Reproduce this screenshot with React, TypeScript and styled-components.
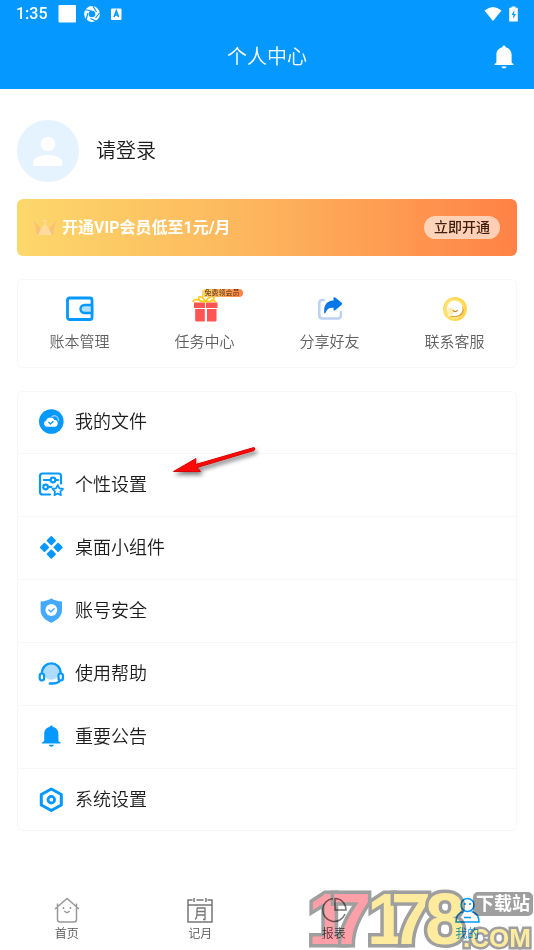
import React from "react";
import styled, { createGlobalStyle } from "styled-components";

const BLUE = "#0598ff";

const GlobalStyle = createGlobalStyle`
  * { box-sizing: border-box; }
  body {
    margin: 0;
    background: #fff;
    color: #1c1c1c;
    font-family: Roboto, "Noto Sans CJK SC", sans-serif;
  }
  button { font: inherit; color: inherit; border: 0; padding: 0; background: none; cursor: pointer; }
  a { color: inherit; text-decoration: none; }
  h1, ul { margin: 0; padding: 0; font-weight: inherit; list-style: none; }
  svg { display: block; flex: none; }
`;

const Screen = styled.div`
  position: relative;
  display: flex;
  flex-direction: column;
  min-height: 100vh;
  overflow: hidden;
`;

const TopArea = styled.header`
  background: ${BLUE};
  color: #fff;
`;

const StatusBar = styled.div`
  display: flex;
  align-items: center;
  justify-content: space-between;
  height: 27px;
  padding: 0 14px 0 16px;
  font-size: 16px;
  font-weight: 500;
`;

const StatusGroup = styled.div<{ $gap: number }>`
  display: flex;
  align-items: center;
  gap: ${(p) => p.$gap}px;
`;

const TitleBar = styled.div`
  display: grid;
  grid-template-columns: 1fr auto 1fr;
  align-items: center;
  height: 62px;
  padding: 0 18px 2px;
`;

const Title = styled.h1`
  grid-column: 2;
  font-size: 20px;
  line-height: 28px;
  font-weight: 350;
`;

const BellButton = styled.button`
  justify-self: end;
`;

const Content = styled.main`
  display: flex;
  flex-direction: column;
  padding: 31px 17px 0;
`;

const Profile = styled.button`
  display: flex;
  align-items: center;
  align-self: flex-start;
  gap: 17px;
  font-size: 20px;
  line-height: 28px;
  font-weight: 350;
`;

const Banner = styled.section`
  display: flex;
  align-items: center;
  height: 57px;
  margin-top: 17px;
  padding: 0 17px 0 16px;
  border-radius: 6px;
  background: linear-gradient(90deg, #fcd86b, #fdb35c 50%, #ff8246);
`;

const BannerText = styled.span`
  flex: 1;
  margin-left: 5px;
  color: #fff;
  font-size: 16px;
  line-height: 24px;
  font-weight: 700;
`;

const OpenButton = styled.button`
  height: 23px;
  padding: 0 10px;
  border-radius: 12px;
  background: rgba(255, 255, 255, 0.6);
  color: #402010;
  font-size: 14px;
  line-height: 23px;
  font-weight: 500;
`;

const Card = styled.ul`
  border-radius: 6px;
  box-shadow: inset 0 0 0 1px #f7f7f7;
`;

const Shortcuts = styled(Card)`
  display: grid;
  grid-template-columns: repeat(4, 1fr);
  height: 89px;
  margin-top: 23px;
`;

const Shortcut = styled.a`
  display: flex;
  flex-direction: column;
  align-items: center;
  gap: 8px;
  padding-top: 16px;
  color: #606060;
  font-size: 15px;
  line-height: 22px;
  font-weight: 350;
`;

const IconHolder = styled.span`
  position: relative;
`;

const PromoBadge = styled.span`
  position: absolute;
  top: -6px;
  left: 12px;
  height: 8px;
  padding: 0 3px;
  border-radius: 4px 4px 4px 0;
  background: linear-gradient(90deg, #fbd568, #ff8246);
  color: #402010;
  font-size: 7px;
  line-height: 8px;
  white-space: nowrap;
`;

const Menu = styled(Card)`
  margin-top: 23px;
`;

const MenuItem = styled.li`
  &:not(:last-child) { border-bottom: 1px solid #f7f7f7; }
`;

const MenuLink = styled.a`
  display: flex;
  align-items: center;
  gap: 11px;
  height: 62px;
  padding: 0 21px;
  font-size: 18px;
  line-height: 26px;
  font-weight: 350;
`;

const TabBar = styled.nav`
  display: grid;
  grid-template-columns: repeat(4, 1fr);
  margin-top: auto;
  padding: 12px 0 7px;
`;

const Tab = styled.a<{ $active?: boolean }>`
  display: flex;
  flex-direction: column;
  align-items: center;
  gap: 2px;
  color: ${(p) => (p.$active ? BLUE : "#555")};
  font-size: 12px;
  line-height: 18px;
  font-weight: 350;
`;

const Pointer = styled.svg`
  position: absolute;
  top: 440px;
  left: 168px;
  pointer-events: none;
  filter: drop-shadow(2px 3px 2px rgba(0, 0, 0, 0.5));
`;

const Watermark = styled.svg`
  position: absolute;
  right: 0;
  bottom: 0;
  pointer-events: none;
  mix-blend-mode: multiply;
`;

const Bell = ({ size, color }: { size: number; color: string }) => (
  <svg width={size} height={size} viewBox="0 0 24 24" fill={color} aria-hidden="true">
    <path d="M12 .5c1 0 1.600.7 1.600 1.800 3.700.8 6 3.600 6 7.400v7.100c0 1 .7 1.500 1.900 2.200v1h-19v-1c1.200-.7 1.900-1.200 1.900-2.200V9.700c0-3.800 2.300-6.600 6-7.400C10.400 1.200 11 .5 12 .5zM9.500 21.500h5c-.2 1.300-1.200 2-2.500 2s-2.300-.7-2.500-2z" />
  </svg>
);

const Wallet = () => (
  <svg width="30" height="28" viewBox="0 0 30 28" fill="none" stroke={BLUE} strokeWidth="2.8">
    <rect x="2.500" y="3" width="24.500" height="21.500" rx="2" />
    <path d="M27 10h-7.500a4 4 0 0 0 0 8H27z" fill="#b0dfff" strokeWidth="2.4" />
  </svg>
);

const Gift = () => (
  <svg width="30" height="28" viewBox="0 0 30 28" aria-hidden="true">
    <path fill="#ff5454" d="M4 7.500h11v5.500H4zM16 7.500h11.500v5.500H16zM5.200 14h9.600v12.500H6.500q-1.300 0-1.300-1.300zM17 14h9.500v11.200q0 1.300-1.300 1.300H17z" />
    <path fill="none" stroke="#ffc914" strokeWidth="1.6" strokeLinecap="round" d="M15.500 6.500C13 1.500 8.500.5 8.500 3.500c0 2.500 4 3.500 7 3 4 .5 8.500-.5 8.500-3.300 0-3-5.500-1.700-8.500 3.300M9 5.500C6.500 3.800 4 4.500 3 6.500M22 5l3.500 1.500" />
  </svg>
);

const Share = () => (
  <svg width="30" height="28" viewBox="0 0 30 28" fill="none">
    <path d="M9 5H7.500Q4.300 5 4.300 8.200v12Q4.300 23.500 7.500 23.500h15.200q3.200 0 3.200-3.200V17" stroke="#bdd1f2" strokeWidth="2.5" strokeLinecap="round" />
    <path d="M18.500 2.500q.8-.7 1.700.1l6.500 5.200q1 1 0 2l-6.500 5.400q-1.700 1-1.700-.8v-1.600c-4.500-.5-6.500 1.200-8 5.300q-1.300 1-1.300-.7C8.700 10.500 11.500 6 18.500 5.600z" fill="#0877e8" />
  </svg>
);

const Service = () => (
  <svg width="30" height="28" viewBox="0 0 30 28">
    <circle cx="15" cy="14" r="12" fill="#ffd84f" />
    <circle cx="14" cy="14" r="10.300" fill="#ffe37a" />
    <path d="M10 22q-3-1-2-5 1-8 8-9 7 1 8 7-1 7-8 7z" fill="#e4a33c" />
    <path d="M15 5.800a7.700 7.700 0 1 1-2.500 15l-3.800 1 .7-2.800A7.700 7.700 0 0 1 15 5.800z" fill="#fff" />
    <path d="M7.500 15q0-3 3-2.500 3 0 3.500 3 .3 4-3 5l-3 .7z" fill="#ffeeb1" />
    <path d="M12.800 15.200q2.500 3 4.800 0" stroke="#ca8128" strokeWidth="1.2" fill="none" />
  </svg>
);

const shortcuts = [
  { label: "账本管理", icon: <Wallet /> },
  { label: "任务中心", icon: <Gift />, badge: "免费领会员" },
  { label: "分享好友", icon: <Share /> },
  { label: "联系客服", icon: <Service /> },
];

const MenuIcon = ({ children }: { children: React.ReactNode }) => (
  <svg width="26" height="26" viewBox="0 0 26 26" fill="none" stroke={BLUE} strokeWidth="2.2" strokeLinecap="round" strokeLinejoin="round" aria-hidden="true">
    {children}
  </svg>
);

const menu = [
  {
    label: "我的文件",
    icon: (
      <MenuIcon>
        <circle cx="13.300" cy="12.500" r="12.300" fill={BLUE} stroke="none" />
        <path d="M14 7.500c3-2 6.500 0 6.500 4" stroke="#8bcfff" strokeWidth="1.4" />
        <path d="M8.800 17.800a3.300 3.300 0 0 1-.6-6.400c.8-3.600 6.800-4.200 8.300-.5 4.400.2 4.300 6.500.3 6.900z" fill="#fff" stroke="none" />
        <path d="M10.800 13.300l1.700 1.700 2.500-2.500" strokeWidth="1.3" />
      </MenuIcon>
    ),
  },
  {
    label: "个性设置",
    icon: (
      <MenuIcon>
        <path d="M12 22.500H4.500Q2 22.500 2 20V4q0-2.500 2.500-2.500h16Q23 1.500 23 4v7.500M6 8h6M18 8h2M10 15h3.500" />
        <circle cx="15" cy="8" r="2.300" />
        <circle cx="7.600" cy="15" r="2.300" />
        <path d="M19.800 13l1.600 3.300 3.600.6-2.600 2.600.5 3.700-3.200-1.700-3.300 1.700.6-3.700-2.600-2.600 3.600-.6z" strokeWidth="1.7" />
      </MenuIcon>
    ),
  },
  {
    label: "桌面小组件",
    icon: (
      <MenuIcon>
        <path fill={BLUE} strokeWidth="1.8" d="M13.300 2l3.700 3.700-3.700 3.700-3.700-3.700zM13.300 15.400l3.700 3.700-3.700 3.700-3.700-3.700zM6.500 8.700l3.700 3.700-3.700 3.700-3.700-3.700zM20.100 8.700l3.700 3.700-3.700 3.700-3.700-3.700z" />
      </MenuIcon>
    ),
  },
  {
    label: "账号安全",
    icon: (
      <MenuIcon>
        <path d="M13.300.2c3 2.200 6.500 3 10.700 3.300v9c0 5.500-4.700 9.500-10.700 12.300C7.300 22 2.600 18 2.600 12.500v-9C6.800 3.200 10.300 2.400 13.300.2z" fill="#45a9ff" stroke="none" />
        <circle cx="13.300" cy="12" r="5.900" fill="#fff" stroke="none" />
        <path d="M10.800 12l2 2 3.300-3.300" stroke="#45a9ff" strokeWidth="1.4" />
      </MenuIcon>
    ),
  },
  {
    label: "使用帮助",
    icon: (
      <MenuIcon>
        <circle cx="13.300" cy="11" r="7.800" fill="#addcff" stroke="none" />
        <path d="M4 12.500C4 -1 22.600 -1 22.600 12.500M22.300 18q-1 4.500-7.500 4.500h-3" strokeWidth="2.4" />
        <rect x="1.700" y="12.500" width="4.400" height="7" rx="2.200" fill="#fff" />
        <rect x="20.500" y="12.500" width="4.400" height="7" rx="2.200" fill="#fff" />
      </MenuIcon>
    ),
  },
  {
    label: "重要公告",
    icon: (
      <MenuIcon>
        <path fill={BLUE} stroke="none" d="M13.300 1.500c1 0 1.500.6 1.500 1.600 3.500.7 5.600 3.200 5.600 6.700v6.700c0 .9.800 1.400 2.200 2v.9H4v-.9c1.400-.6 2.200-1.100 2.200-2V9.800c0-3.500 2.100-6 5.600-6.700 0-1 .5-1.600 1.500-1.600zM10.800 20.800h5c-.2 1.200-1.200 1.900-2.500 1.900s-2.300-.7-2.500-1.900z" />
      </MenuIcon>
    ),
  },
  {
    label: "系统设置",
    icon: (
      <MenuIcon>
        <path strokeWidth="3" d="M13.300 2l10 5.500v10.500l-10 5.500-10-5.500V7.500z" />
        <circle cx="13.300" cy="12.700" r="3.300" strokeWidth="2.800" />
      </MenuIcon>
    ),
  },
];

const TabIcon = ({ children, color = "#999" }: { children: React.ReactNode; color?: string }) => (
  <svg width="26" height="26" viewBox="0 0 26 26" fill="none" stroke={color} strokeWidth="1.5" aria-hidden="true">
    {children}
  </svg>
);

const tabs = [
  {
    label: "首页",
    icon: (
      <TabIcon>
        <path d="M1 12L13 1.500 25 12M3.500 10v12.500q0 2.500 2.500 2.500h14q2.500 0 2.500-2.500V10M3.500 9V6.500M22.500 9V6.500" />
        <path d="M10.300 14q2.700 3 5.400 0M9.500 10v2M16.500 10v2" />
      </TabIcon>
    ),
  },
  {
    label: "记月",
    icon: (
      <TabIcon color="#777">
        <path d="M5.500 3H1v22h24V3h-4.500M1 8h24M7 1v4M19 1v4M9.500 3h7" />
        <path d="M10 11h8v11.500h-2M10 11v5q0 5-2 6.500M10 14.500h8M10 18h8" strokeWidth="1.3" />
      </TabIcon>
    ),
  },
  {
    label: "报表",
    icon: (
      <TabIcon color="#777">
        <path d="M12 1.500A11.500 11.500 0 1 0 24 17M14 1.500V13h11C25 7 20.500 1.500 14 1.500z" />
      </TabIcon>
    ),
  },
  {
    label: "我的",
    active: true,
    icon: (
      <TabIcon color={BLUE}>
        <circle cx="13.500" cy="8" r="6.500" />
        <path d="M9.500 14.500Q2 16.500 2 25h23q0-8.500-7.500-10.500M10 20.500h7M11 6v2M16 6v2" />
      </TabIcon>
    ),
  },
];

export default function App() {
  return (
    <>
      <GlobalStyle />
      <Screen>
        <TopArea>
          <StatusBar>
            <StatusGroup $gap={8}>
              <span>1:35</span>
              <svg width="70" height="18" viewBox="0 0 70 18" aria-hidden="true">
                <rect x="2.500" y="0" width="17.500" height="17.500" rx="1" fill="#fff" />
                <circle cx="36" cy="9" r="5.600" fill="none" stroke="#fff" strokeWidth="4.6" />
                <path d="M28.500 4.500l7 1.500M37 1l3.500 6M43.500 8l-4 5M41 16.500l-6.500-3M30 15l2-7" stroke={BLUE} strokeWidth="1.2" />
                <rect x="55" y="3.500" width="10.500" height="11.500" rx="1" fill="#fff" />
                <path d="M58 12l2.300-6 2.300 6M58.700 10h3.200" fill="none" stroke={BLUE} strokeWidth="1.6" />
              </svg>
            </StatusGroup>
            <StatusGroup $gap={6}>
              <svg width="18" height="16" viewBox="0 0 18 16" aria-label="Wi-Fi">
                <path d="M.5 4.500Q9-2.500 17.500 4.500L9 15z" fill="#fff" />
              </svg>
              <svg width="12" height="16" viewBox="0 0 12 16" aria-label="电池">
                <path d="M3.500 1.800V.5h4v1.300h2.300V15.500H1.200V1.800z" fill="#fff" />
                <path d="M6.500 4L3.500 9h2L5 13l3-5H6z" fill={BLUE} />
              </svg>
            </StatusGroup>
          </StatusBar>
          <TitleBar>
            <Title>个人中心</Title>
            <BellButton aria-label="通知"><Bell size={24} color="#fff" /></BellButton>
          </TitleBar>
        </TopArea>

        <Content>
          <Profile>
            <svg width="62" height="62" viewBox="0 0 62 62" aria-hidden="true">
              <circle cx="31" cy="31" r="31" fill="#e4f3ff" />
              <circle cx="31" cy="24" r="7.300" fill="#fff" />
              <path d="M16 46v-3.500c0-4.500 8-7.500 15-7.500s14.500 3 14.500 7.500V46z" fill="#fff" />
            </svg>
            <span>请登录</span>
          </Profile>

          <Banner>
            <svg width="24" height="18" viewBox="0 0 24 18" aria-hidden="true">
              <path d="M2 4l5 4.500L5.500 16H4zM22 4l-5 4.500L18.500 16H20z" fill="#f8bd68" />
              <path d="M4 16L3 5l5.500 6L12 2l3.500 9L21 5l-1 11z" fill="#fac07c" />
              <path d="M5 16l7-13 7 13z" fill="#ffdc9b" />
              <circle cx="12" cy="2" r="1.300" fill="#ffdc9b" />
              <circle cx="2" cy="4" r="1.300" fill="#fac583" />
              <circle cx="22" cy="4" r="1.300" fill="#fac583" />
            </svg>
            <BannerText>开通VIP会员低至1元/月</BannerText>
            <OpenButton>立即开通</OpenButton>
          </Banner>

          <Shortcuts>
            {shortcuts.map((s) => (
              <li key={s.label}>
                <Shortcut href="#">
                  <IconHolder>
                    {s.icon}
                    {s.badge && <PromoBadge>{s.badge}</PromoBadge>}
                  </IconHolder>
                  {s.label}
                </Shortcut>
              </li>
            ))}
          </Shortcuts>

          <Menu>
            {menu.map((m) => (
              <MenuItem key={m.label}>
                <MenuLink href="#">
                  {m.icon}
                  {m.label}
                </MenuLink>
              </MenuItem>
            ))}
          </Menu>
        </Content>

        <TabBar>
          {tabs.map((t) => (
            <Tab key={t.label} href="#" $active={t.active}>
              {t.icon}
              {t.label}
            </Tab>
          ))}
        </TabBar>

        <Pointer width="96" height="42" viewBox="0 0 96 42" aria-hidden="true">
          <path d="M5.500 31.500L28 18.500l-.5 6L86 7.500q2 1.500 0 3L29 27.500l3.500 4z" fill="#ff0808" stroke="#d00" />
        </Pointer>

        <Watermark width="226" height="62" viewBox="0 0 226 62">
          <g fontFamily="Liberation Sans, sans-serif" fontWeight="700" stroke="#9f9f9f" strokeLinejoin="miter" paintOrder="stroke">
            <g fontSize="72" strokeWidth="7">
              <text y="56" fill="#ffa0a9" x="0 23">17</text>
              <text y="56" fill="#ffeb9e" x="59 83 117">178</text>
            </g>
            <text x="155" y="59" fontSize="26" strokeWidth="5" fill="#ffeb9e">.COM</text>
          </g>
          <rect x="165" y="4" width="60" height="24" rx="5" fill="#9f9f9f" />
          <text x="168" y="22" fontFamily="Noto Sans CJK SC, sans-serif" fontSize="18" fontWeight="700" fill="#fff">下载站</text>
        </Watermark>
      </Screen>
    </>
  );
}
